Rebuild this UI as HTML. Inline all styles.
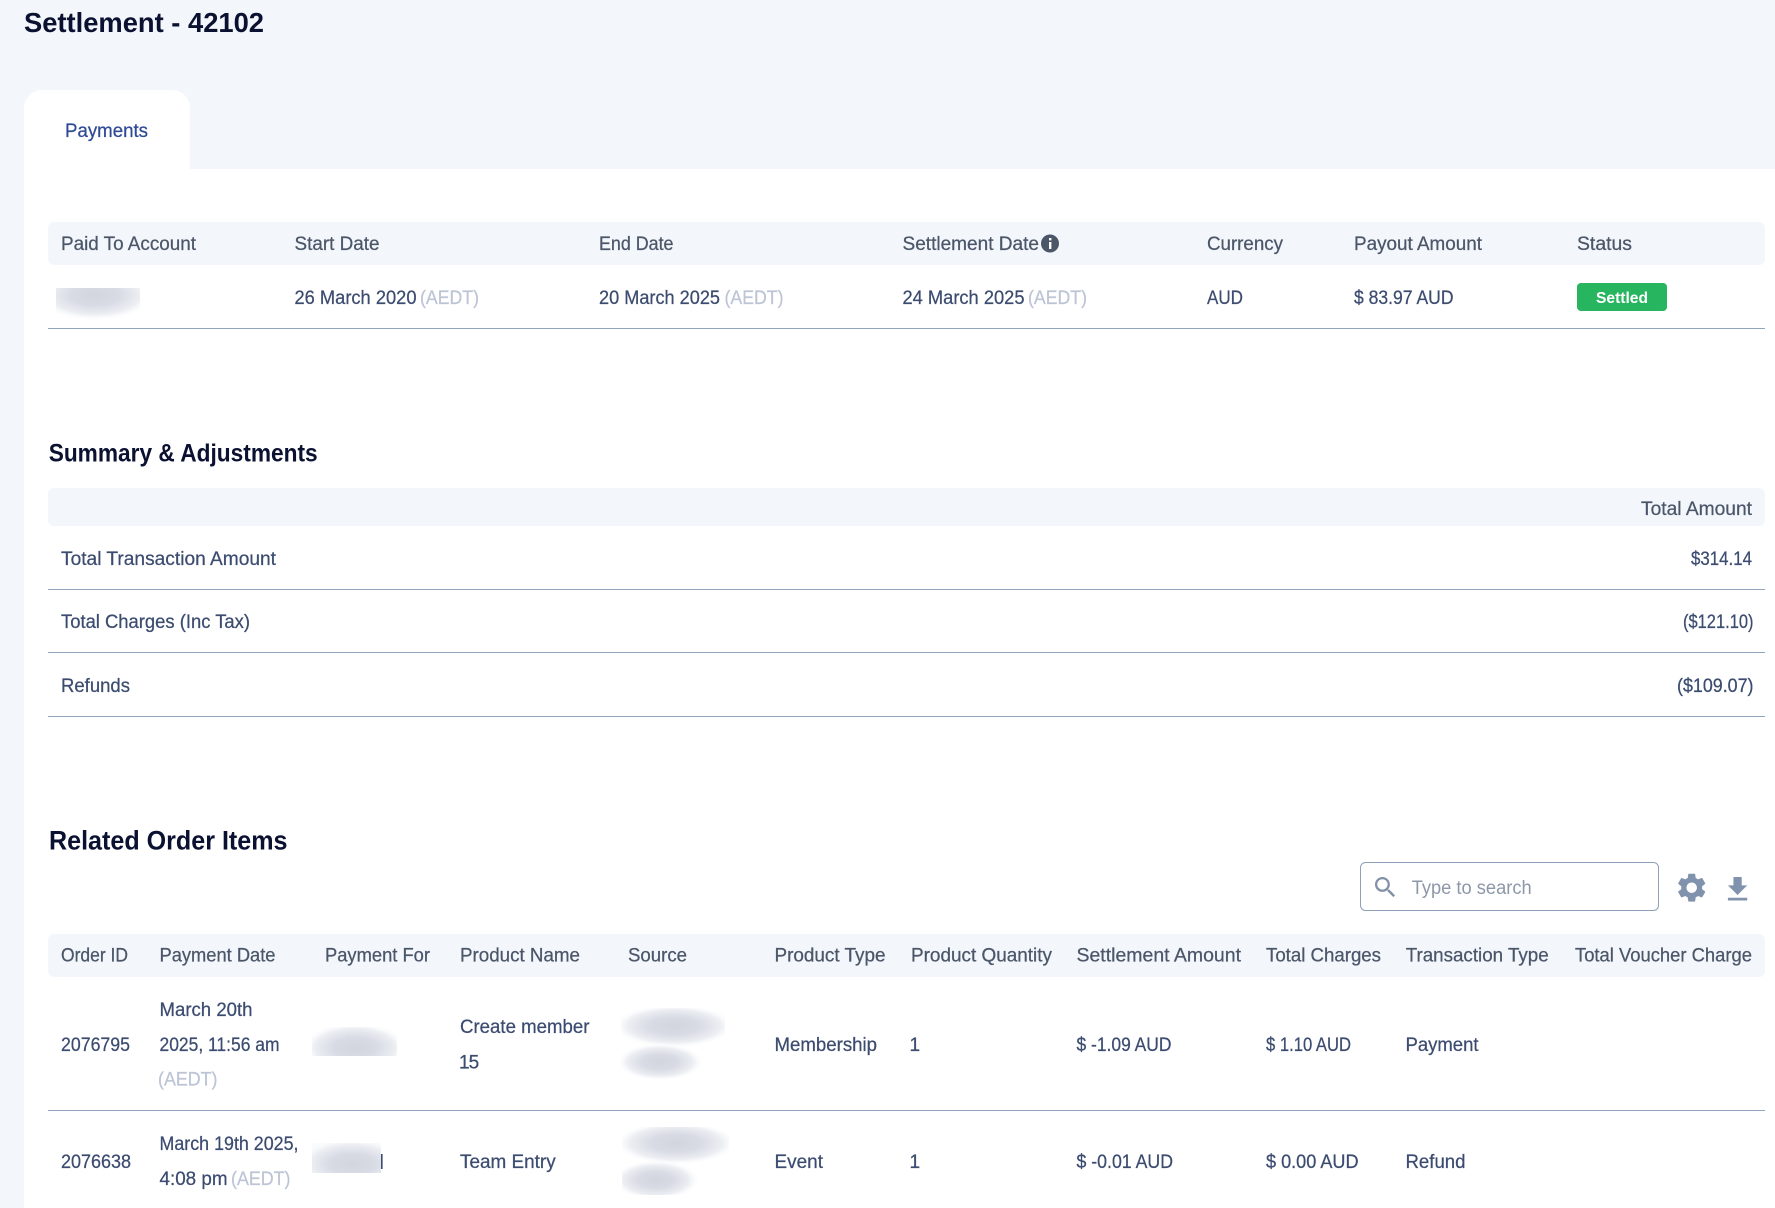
<!DOCTYPE html>
<html><head><meta charset="utf-8"><title>Settlement - 42102</title>
<style>
html,body{margin:0;padding:0;width:1775px;height:1208px;overflow:hidden;background:#f3f6fb}
svg{display:block;position:absolute;left:0;top:0}
text{font-family:"Liberation Sans",sans-serif;font-size:19px;fill:#3c4c70;stroke:#3c4c70;stroke-width:.25px}
.h{fill:#4b5669;stroke:#4b5669}
.g{fill:#bcc4d6;stroke:#bcc4d6}
.t{font-weight:bold;fill:#0b1130;stroke:none}
</style></head><body>
<svg width="1775" height="1208" viewBox="0 0 1775 1208" xmlns="http://www.w3.org/2000/svg">
<defs>
<radialGradient id="s"><stop offset="0" stop-color="#d2d5df"/><stop offset=".4" stop-color="#d8dbe4"/><stop offset=".75" stop-color="#eceef3"/><stop offset="1" stop-color="#ffffff" stop-opacity="0"/></radialGradient>
<clipPath id="c1"><rect x="56" y="288" width="84" height="32"/></clipPath>
<clipPath id="c2"><rect x="312" y="1027" width="85" height="29"/></clipPath>
<clipPath id="c3"><rect x="312" y="1143" width="69" height="30"/></clipPath>
<clipPath id="c4"><rect x="621" y="1008" width="104" height="74"/></clipPath>
<clipPath id="c5"><rect x="622" y="1127" width="107" height="68"/></clipPath>
</defs>

<rect x="0" y="0" width="1775" height="1208" fill="#f3f6fb"/>
<path d="M24 1208V108a18 18 0 0 1 18-18H172a18 18 0 0 1 18 18V169H1775V1208Z" fill="#fff"/>

<text class="t" x="24" y="32" style="font-size:28px" textLength="240" lengthAdjust="spacingAndGlyphs">Settlement - 42102</text>
<text x="65" y="137" style="fill:#2f4a96;stroke:#2f4a96" textLength="83" lengthAdjust="spacingAndGlyphs">Payments</text>

<!-- Table 1 -->
<rect x="48" y="222" width="1717" height="43" rx="6" fill="#f3f6fb"/>
<text class="h" x="61" y="250" textLength="135" lengthAdjust="spacingAndGlyphs">Paid To Account</text>
<text class="h" x="294.5" y="250" textLength="85" lengthAdjust="spacingAndGlyphs">Start Date</text>
<text class="h" x="599" y="250" textLength="74.5" lengthAdjust="spacingAndGlyphs">End Date</text>
<text class="h" x="902.5" y="250" textLength="136.5" lengthAdjust="spacingAndGlyphs">Settlement Date</text>
<circle cx="1050" cy="243.5" r="9" fill="#4b5669"/>
<rect x="1049" y="242" width="2.4" height="7" fill="#fff"/><rect x="1049" y="238" width="2.4" height="2.4" fill="#fff"/>
<text class="h" x="1207" y="250" textLength="76" lengthAdjust="spacingAndGlyphs">Currency</text>
<text class="h" x="1354" y="250" textLength="128" lengthAdjust="spacingAndGlyphs">Payout Amount</text>
<text class="h" x="1577" y="250" textLength="55" lengthAdjust="spacingAndGlyphs">Status</text>

<g clip-path="url(#c1)"><ellipse cx="95" cy="295" rx="60" ry="26" fill="url(#s)"/></g>
<text x="294.5" y="304" textLength="122" lengthAdjust="spacingAndGlyphs">26 March 2020</text>
<text class="g" x="420" y="304" textLength="59" lengthAdjust="spacingAndGlyphs">(AEDT)</text>
<text x="599" y="304" textLength="121" lengthAdjust="spacingAndGlyphs">20 March 2025</text>
<text class="g" x="724.5" y="304" textLength="59" lengthAdjust="spacingAndGlyphs">(AEDT)</text>
<text x="902.5" y="304" textLength="122" lengthAdjust="spacingAndGlyphs">24 March 2025</text>
<text class="g" x="1028" y="304" textLength="59" lengthAdjust="spacingAndGlyphs">(AEDT)</text>
<text x="1207" y="304" textLength="36" lengthAdjust="spacingAndGlyphs">AUD</text>
<text x="1354" y="304" textLength="99.5" lengthAdjust="spacingAndGlyphs">$ 83.97 AUD</text>
<rect x="1577" y="283" width="90" height="28" rx="4" fill="#27b55f"/>
<text x="1596" y="303" style="font-size:16px;fill:#fff;stroke:none;font-weight:bold" textLength="52" lengthAdjust="spacingAndGlyphs">Settled</text>
<rect x="48" y="328" width="1717" height="1" fill="#93a5bd"/>

<!-- Summary -->
<text class="t" x="48.7" y="461.7" style="font-size:25px" textLength="269" lengthAdjust="spacingAndGlyphs">Summary &amp; Adjustments</text>
<rect x="48" y="488" width="1717" height="38" rx="6" fill="#f3f6fb"/>
<text class="h" x="1641" y="515" textLength="111" lengthAdjust="spacingAndGlyphs">Total Amount</text>
<text x="61" y="565" textLength="215" lengthAdjust="spacingAndGlyphs">Total Transaction Amount</text>
<text x="1691" y="565" textLength="61" lengthAdjust="spacingAndGlyphs">$314.14</text>
<rect x="48" y="589" width="1717" height="1" fill="#93a5bd"/>
<text x="61" y="628" textLength="189" lengthAdjust="spacingAndGlyphs">Total Charges (Inc Tax)</text>
<text x="1683" y="628" textLength="70.5" lengthAdjust="spacingAndGlyphs">($121.10)</text>
<rect x="48" y="652" width="1717" height="1" fill="#93a5bd"/>
<text x="61" y="692" textLength="69" lengthAdjust="spacingAndGlyphs">Refunds</text>
<text x="1677" y="692" textLength="76.5" lengthAdjust="spacingAndGlyphs">($109.07)</text>
<rect x="48" y="716" width="1717" height="1" fill="#93a5bd"/>

<!-- Related -->
<text class="t" x="49" y="849.3" style="font-size:27px" textLength="238.5" lengthAdjust="spacingAndGlyphs">Related Order Items</text>

<rect x="1360.5" y="862.5" width="298" height="48" rx="5" fill="#fff" stroke="#8fa1b9" stroke-width="1"/>
<path transform="translate(1371.5 873.5) scale(1.15)" fill="#8291a8" d="M15.5 14h-.79l-.28-.27C15.41 12.59 16 11.11 16 9.5 16 5.91 13.09 3 9.5 3S3 5.91 3 9.5 5.91 16 9.5 16c1.61 0 3.09-.59 4.23-1.57l.27.28v.79l5 4.99L20.49 19l-4.99-5zm-6 0C7.01 14 5 11.99 5 9.5S7.01 5 9.5 5 14 7.01 14 9.5 11.99 14 9.5 14z"/>
<text x="1411.7" y="894" style="fill:#8d97a8;stroke:none" textLength="120" lengthAdjust="spacingAndGlyphs">Type to search</text>
<path transform="translate(1674.3 870.3) scale(1.45)" fill="#8193ac" d="M19.14 12.94c.04-.3.06-.61.06-.94 0-.32-.02-.64-.07-.94l2.03-1.58c.18-.14.23-.41.12-.61l-1.92-3.32c-.12-.22-.37-.29-.59-.22l-2.39.96c-.5-.38-1.03-.7-1.62-.94l-.36-2.54c-.04-.24-.24-.41-.48-.41h-3.84c-.24 0-.43.17-.47.41l-.36 2.54c-.59.24-1.13.57-1.62.94l-2.39-.96c-.22-.08-.47 0-.59.22L2.74 8.87c-.12.21-.08.47.12.61l2.03 1.58c-.05.3-.09.63-.09.94s.02.64.07.94l-2.03 1.58c-.18.14-.23.41-.12.61l1.92 3.32c.12.22.37.29.59.22l2.39-.96c.5.38 1.03.7 1.62.94l.36 2.54c.05.24.24.41.48.41h3.84c.24 0 .44-.17.47-.41l.36-2.54c.59-.24 1.13-.56 1.62-.94l2.39.96c.22.08.47 0 .59-.22l1.92-3.32c.12-.22.07-.47-.12-.61l-2.01-1.58zM12 15.6c-1.98 0-3.6-1.62-3.6-3.6s1.62-3.6 3.6-3.6 3.6 1.62 3.6 3.6-1.62 3.6-3.6 3.6z"/>
<path transform="translate(1721 872.9) scale(1.38)" fill="#8193ac" d="M19 9h-4V3H9v6H5l7 7 7-7zM5 18v2h14v-2H5z"/>

<rect x="48" y="934" width="1717" height="43" rx="6" fill="#f3f6fb"/>
<text class="h" x="61" y="961.7" textLength="67" lengthAdjust="spacingAndGlyphs">Order ID</text>
<text class="h" x="159.5" y="961.7" textLength="116" lengthAdjust="spacingAndGlyphs">Payment Date</text>
<text class="h" x="325" y="961.7" textLength="105" lengthAdjust="spacingAndGlyphs">Payment For</text>
<text class="h" x="460" y="961.7" textLength="120" lengthAdjust="spacingAndGlyphs">Product Name</text>
<text class="h" x="628" y="961.7" textLength="59" lengthAdjust="spacingAndGlyphs">Source</text>
<text class="h" x="774.5" y="961.7" textLength="111" lengthAdjust="spacingAndGlyphs">Product Type</text>
<text class="h" x="911" y="961.7" textLength="141" lengthAdjust="spacingAndGlyphs">Product Quantity</text>
<text class="h" x="1076.5" y="961.7" textLength="164.5" lengthAdjust="spacingAndGlyphs">Settlement Amount</text>
<text class="h" x="1266" y="961.7" textLength="115" lengthAdjust="spacingAndGlyphs">Total Charges</text>
<text class="h" x="1405.7" y="961.7" textLength="143" lengthAdjust="spacingAndGlyphs">Transaction Type</text>
<text class="h" x="1575" y="961.7" textLength="177" lengthAdjust="spacingAndGlyphs">Total Voucher Charge</text>

<!-- Row 1 -->
<text x="61" y="1051" textLength="69" lengthAdjust="spacingAndGlyphs">2076795</text>
<text x="159.5" y="1016" textLength="93" lengthAdjust="spacingAndGlyphs">March 20th</text>
<text x="159.5" y="1051" textLength="120" lengthAdjust="spacingAndGlyphs">2025, 11:56 am</text>
<text class="g" x="158" y="1085.7" textLength="59.5" lengthAdjust="spacingAndGlyphs">(AEDT)</text>
<g clip-path="url(#c2)"><ellipse cx="355" cy="1048" rx="54" ry="26" fill="url(#s)"/></g>
<text x="460" y="1033" textLength="129.5" lengthAdjust="spacingAndGlyphs">Create member</text>
<text x="459" y="1068.3" style="letter-spacing:-1px">15</text>
<g clip-path="url(#c4)"><ellipse cx="674" cy="1026" rx="62" ry="22" fill="url(#s)"/><ellipse cx="660" cy="1062" rx="44" ry="19" fill="url(#s)"/></g>
<text x="774.5" y="1051" textLength="102.5" lengthAdjust="spacingAndGlyphs">Membership</text>
<text x="909.5" y="1051">1</text>
<text x="1076.5" y="1051" textLength="95" lengthAdjust="spacingAndGlyphs">$ -1.09 AUD</text>
<text x="1266" y="1051" textLength="85" lengthAdjust="spacingAndGlyphs">$ 1.10 AUD</text>
<text x="1405.5" y="1051" textLength="73" lengthAdjust="spacingAndGlyphs">Payment</text>
<rect x="48" y="1110" width="1717" height="1" fill="#93a5bd"/>

<!-- Row 2 -->
<text x="61" y="1168" textLength="70" lengthAdjust="spacingAndGlyphs">2076638</text>
<text x="159.5" y="1150" textLength="139" lengthAdjust="spacingAndGlyphs">March 19th 2025,</text>
<text x="159.5" y="1185" textLength="68" lengthAdjust="spacingAndGlyphs">4:08 pm</text>
<text class="g" x="231" y="1185" textLength="59.5" lengthAdjust="spacingAndGlyphs">(AEDT)</text>
<g clip-path="url(#c3)"><rect x="312" y="1143" width="69" height="30" fill="#fafbfc"/><ellipse cx="352" cy="1164" rx="56" ry="26" fill="url(#s)"/></g>
<rect x="381" y="1154" width="1.6" height="15" fill="#3c4c70"/>
<text x="460" y="1168" textLength="95.7" lengthAdjust="spacingAndGlyphs">Team Entry</text>
<g clip-path="url(#c5)"><ellipse cx="676" cy="1143" rx="62" ry="22" fill="url(#s)"/><ellipse cx="656" cy="1180" rx="44" ry="20" fill="url(#s)"/></g>
<text x="774.5" y="1168" textLength="48.5" lengthAdjust="spacingAndGlyphs">Event</text>
<text x="909.5" y="1168">1</text>
<text x="1076.5" y="1168" textLength="96.5" lengthAdjust="spacingAndGlyphs">$ -0.01 AUD</text>
<text x="1266" y="1168" textLength="92.5" lengthAdjust="spacingAndGlyphs">$ 0.00 AUD</text>
<text x="1405.5" y="1168" textLength="60" lengthAdjust="spacingAndGlyphs">Refund</text>
</svg>
</body></html>
